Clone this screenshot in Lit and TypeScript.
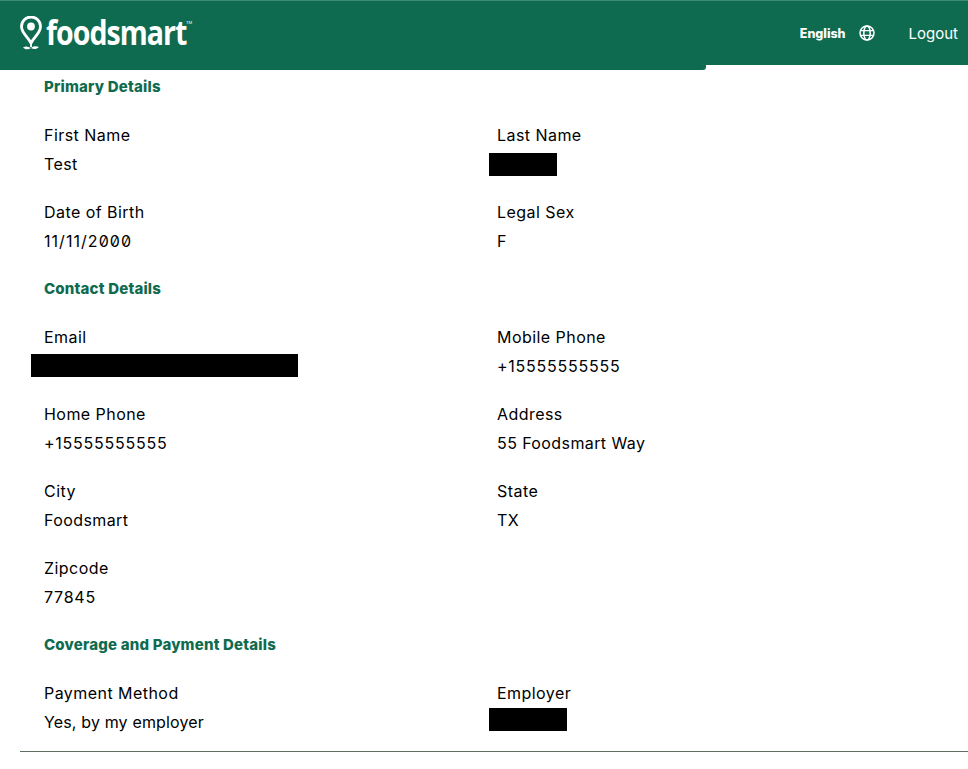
import { LitElement, html, css } from "lit";
import { customElement } from "lit/decorators.js";

type Field = { label: string; value?: string; kind?: string; redact?: number; left?: number; top?: number };

const primary: Field[] = [
  { label: "First Name", value: "Test" },
  { label: "Last Name", redact: 68, left: -8, top: 3 },
  { label: "Date of Birth", value: "11/11/2000", kind: "date" },
  { label: "Legal Sex", value: "F" },
];
const contact: Field[] = [
  { label: "Email", redact: 267, left: -13, top: 2 },
  { label: "Mobile Phone", value: "+15555555555", kind: "numeric" },
  { label: "Home Phone", value: "+15555555555", kind: "numeric" },
  { label: "Address", value: "55 Foodsmart Way" },
  { label: "City", value: "Foodsmart" },
  { label: "State", value: "TX" },
  { label: "Zipcode", value: "77845", kind: "numeric" },
];
const coverage: Field[] = [
  { label: "Payment Method", value: "Yes, by my employer", kind: "tight" },
  { label: "Employer", redact: 78, left: -8, top: 0 },
];

@customElement("app-root")
export class AppRoot extends LitElement {
  static styles = css`
    :host {
      display: block;
      width: 968px;
      height: 769px;
      overflow: hidden;
      background: #fff;
      font-family: Inter, "Liberation Sans", sans-serif;
      color: #000;
    }
    .header {
      height: 64px;
      background: #0f6b4f;
      border-top: 1px solid #3f8a72;
      display: flex;
      align-items: center;
      padding: 0 10px 0 19px;
      color: #fff;
    }
    .tab {
      width: 706px;
      height: 5px;
      background: #0f6b4f;
      border-bottom-right-radius: 3px;
    }
    .brand {
      display: flex;
      align-items: center;
      gap: 3px;
      margin-top: 1px;
    }
    .wordmark {
      font-family: "Open Sans", sans-serif;
      font-weight: 700;
      font-size: 34px;
      line-height: 36px;
      letter-spacing: -1.2px;
      display: inline-block;
      transform: scaleX(0.84);
      transform-origin: left center;
      width: 138px;
      margin-top: -3px;
      white-space: nowrap;
    }
    .tm {
      font-size: 4px;
      line-height: 4px;
      align-self: flex-start;
      margin-top: 5px;
      margin-left: -1px;
    }
    .spacer { flex: 1; }
    .lang {
      font-family: Inter, sans-serif;
      font-weight: 800;
      font-size: 12.5px;
      margin-right: 13px;
    }
    .globe { display: block; margin-right: 34px; }
    .logout {
      font-family: Inter, sans-serif;
      font-size: 15px;
    }
    .content { padding: 0 0 0 44px; }
    h2 {
      margin: 0;
      color: #0f6b4f;
      font-size: 15px;
      line-height: 24px;
      font-weight: 800;
      letter-spacing: 0.2px;
    }
    .first { padding-top: 5px; }
    .section { padding-top: 21px; }
    .grid {
      display: grid;
      grid-template-columns: 453px 1fr;
      row-gap: 19px;
      padding-top: 22px;
    }
    .label, .value {
      font-size: 16px;
      line-height: 29px;
      height: 29px;
    }
    .label { letter-spacing: 0.45px; }
    .value {
      letter-spacing: 0.4px;
      font-feature-settings: "zero" 1;
    }
    .value.numeric { letter-spacing: 0.75px; }
    .value.date { letter-spacing: 1.05px; }
    .value.tight { letter-spacing: 0.15px; }
    .redact {
      display: block;
      height: 23px;
      background: #000;
    }
    .rule {
      height: 1px;
      margin: 14px 0 0 20px;
      background: #5f6f62;
    }
  `;

  private renderGrid(fields: Field[]) {
    return html`<div class="grid">
      ${fields.map(
        (f) => html`<div>
          <div class="label">${f.label}</div>
          <div class="value ${f.kind ?? ""}">
            ${f.redact
              ? html`<span class="redact" style="width:${f.redact}px;margin-left:${f.left}px;transform:translateY(${f.top}px)"></span>`
              : f.value}
          </div>
        </div>`
      )}
    </div>`;
  }

  render() {
    return html`
      <div class="header">
        <div class="brand">
          <svg width="24" height="36" viewBox="0 0 24 36" fill="none" stroke="#fff">
            <path d="M12 27 C9 21 2.500 17 2.500 10.500 A9.500 9.500 0 0 1 21.500 10.500 C21.500 17 15 21 12 27 Z" stroke-width="2.800" stroke-linejoin="round"/>
            <circle cx="12" cy="10.500" r="3.900" fill="#fff" stroke="none"/>
            <path d="M12 27 V31" stroke-width="1.800"/>
            <path d="M4 31.500 C7 29.500 9 30.500 12 32 C15 34 18 33 20 31 C17 29.500 14 30 12 32 C9 34 6 33.500 4 31.500 Z" fill="#fff" stroke="none"/>
          </svg>
          <span class="wordmark">foodsmart</span>
          <span class="tm">TM</span>
        </div>
        <div class="spacer"></div>
        <span class="lang">English</span>
        <svg class="globe" width="16" height="16" viewBox="0 0 16 16" fill="none" stroke="#fff" stroke-width="1.500">
          <circle cx="8" cy="8" r="7"/>
          <ellipse cx="8" cy="8" rx="3.200" ry="7"/>
          <path d="M1 5.700 H15 M1 10.300 H15" stroke-width="1.200"/>
        </svg>
        <span class="logout">Logout</span>
      </div>
      <div class="tab"></div>
      <div class="content">
        <div class="first"><h2>Primary Details</h2></div>
        ${this.renderGrid(primary)}
        <div class="section"><h2>Contact Details</h2></div>
        ${this.renderGrid(contact)}
        <div class="section"><h2>Coverage and Payment Details</h2></div>
        ${this.renderGrid(coverage)}
      </div>
      <div class="rule"></div>
    `;
  }
}
